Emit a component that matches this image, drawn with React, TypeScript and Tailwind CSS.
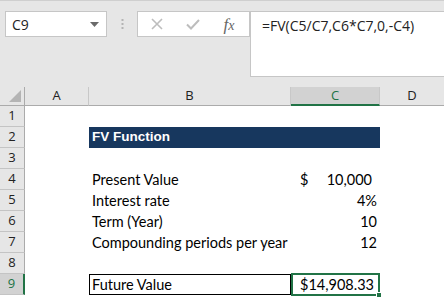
import React from "react";

const rows = [1, 2, 3, 4, 5, 6, 7, 8, 9];

const body = "font-['Lato','Liberation_Sans',sans-serif] text-[14.5px] text-black";

function RowHead({ n }: { n: number }) {
  const active = n === 9;
  return (
    <div
      className={`h-[21px] flex items-center justify-center border-b border-[#c4c4c4] text-[13px] ${
        active
          ? "bg-[#d2d2d2] text-[#217346] border-r-2 border-r-[#217346]"
          : "bg-[#e6e6e6] text-[#222] border-r border-r-[#ababab]"
      }`}
    >
      {n}
    </div>
  );
}

function Cells({ n }: { n: number }) {
  if (n === 2) {
    return (
      <>
        <div className="h-[21px]" />
        <div className="col-span-2 h-[21px] bg-[#17375e] flex items-center pl-[3px] text-white font-bold text-[13.5px] font-['Liberation_Sans',Arial,sans-serif]">
          FV Function
        </div>
        <div className="h-[21px]" />
      </>
    );
  }
  if (n === 9) {
    return (
      <>
        <div className="h-[21px]" />
        <div className={`h-[21px] border border-black flex items-center pl-[2px] ${body}`}>Future Value</div>
        <div className={`relative h-[23px] -mt-[1px] border-2 border-[#217346] flex items-center justify-between pl-[7px] pr-[6px] ${body}`}>
          <span>$</span>
          <span>14,908.33</span>
          <div className="absolute -right-[4px] -bottom-[4px] w-[6px] h-[6px] bg-[#217346] border border-white" />
        </div>
        <div className="h-[21px]" />
      </>
    );
  }
  const data: Record<number, [string, React.ReactNode]> = {
    4: [
      "Present Value",
      <div className="flex justify-between pl-[9px] pr-[8px]">
        <span>$</span>
        <span>10,000</span>
      </div>,
    ],
    5: ["Interest rate", <div className="text-right pr-[3px]">4%</div>],
    6: ["Term (Year)", <div className="text-right pr-[3px]">10</div>],
    7: ["Compounding periods per year", <div className="text-right pr-[3px]">12</div>],
  };
  const d = data[n];
  return (
    <>
      <div className="h-[21px]" />
      <div className={`h-[21px] flex items-center pl-[3px] whitespace-nowrap ${body}`}>{d ? d[0] : ""}</div>
      <div className={`h-[21px] flex flex-col justify-center ${body}`}>{d ? d[1] : null}</div>
      <div className="h-[21px]" />
    </>
  );
}

export default function App() {
  return (
    <div className="w-[444px] h-[297px] bg-white overflow-hidden font-['Open_Sans','Liberation_Sans',sans-serif]">
      {/* formula bar */}
      <div className="h-[87px] bg-[#e6e6e6] border-t border-[#cfcfcf] flex items-start pt-[10px] pl-[5px]">
        <div className="w-[102px] h-[26px] bg-white border border-[#c6c6c6] flex items-center justify-between pl-[6px] pr-[7px]">
          <span className="text-[14px] text-[#222]">C9</span>
          <svg width="9" height="5" viewBox="0 0 9 5">
            <path d="M0 0h9L4.5 5z" fill="#6a6a6a" />
          </svg>
        </div>
        <div className="w-[30px] h-[26px] flex items-center justify-center">
          <svg width="3" height="10" viewBox="0 0 3 10">
            <rect x="0.5" y="0" width="2" height="2" fill="#b4b4b4" />
            <rect x="0.5" y="4" width="2" height="2" fill="#b4b4b4" />
            <rect x="0.5" y="8" width="2" height="2" fill="#b4b4b4" />
          </svg>
        </div>
        <div className="w-[113px] h-[26px] bg-white border border-[#c6c6c6] flex items-center">
          <div className="w-[38px] flex justify-center">
            <svg width="12" height="12" viewBox="0 0 12 12">
              <path d="M1 1l10 10M11 1L1 11" stroke="#bdbdbd" strokeWidth="1.6" />
            </svg>
          </div>
          <div className="w-[34px] flex justify-center">
            <svg width="14" height="11" viewBox="0 0 14 11">
              <path d="M1 5.5l4 4L13 1" stroke="#bdbdbd" strokeWidth="2" fill="none" />
            </svg>
          </div>
          <div className="w-[38px] flex justify-center">
            <span className="italic text-[17px] leading-none text-[#666] font-['Liberation_Serif',serif]">
              <span>f</span>
              <span className="text-[14px]">x</span>
            </span>
          </div>
        </div>
        <div className="flex-1 h-[66px] bg-white border border-r-0 border-[#c6c6c6] pl-[11px] pt-[3px] text-[14px] text-[#222]">
          =FV(C5/C7,C6*C7,0,-C4)
        </div>
      </div>

      {/* grid */}
      <div className="grid grid-cols-[25px_64px_202px_89px_64px]">
        <div className="h-[19px] bg-[#e6e6e6] border-b border-[#ababab] border-r border-r-[#ababab] flex items-end justify-end pr-[3px] pb-[3px]">
          <svg width="12" height="12" viewBox="0 0 12 12">
            <path d="M12 0V12H0z" fill="#b4b4b4" />
          </svg>
        </div>
        <div className="h-[19px] bg-[#e6e6e6] border-b border-[#ababab] border-r border-r-[#c8c8c8] flex items-center justify-center text-[13px] text-[#222]">
          A
        </div>
        <div className="h-[19px] bg-[#e6e6e6] border-b border-[#ababab] border-r border-r-[#c8c8c8] flex items-center justify-center text-[13px] text-[#222]">
          B
        </div>
        <div className="h-[19px] bg-[#d2d2d2] border-b-2 border-[#217346] border-r border-r-[#c8c8c8] flex items-center justify-center text-[13px] text-[#217346]">
          C
        </div>
        <div className="h-[19px] bg-[#e6e6e6] border-b border-[#ababab] flex items-center justify-center text-[13px] text-[#222]">
          D
        </div>
        {rows.map((n) => (
          <React.Fragment key={n}>
            <RowHead n={n} />
            <Cells n={n} />
          </React.Fragment>
        ))}
      </div>
    </div>
  );
}
